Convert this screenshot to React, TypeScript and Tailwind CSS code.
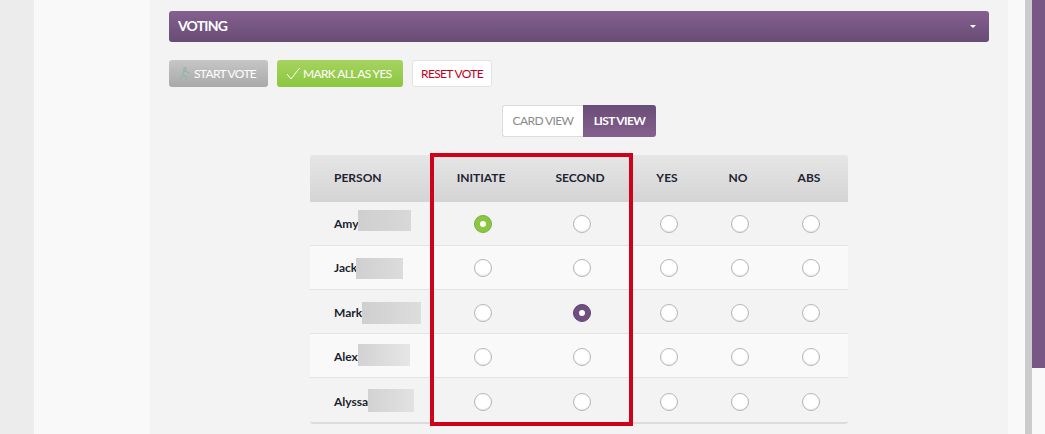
const rows = [
  { name: "Amy", blur: "ml-[-1px] mt-[-7px] h-[21px] w-[53px] from-[#cfcfcf] to-[#d8d8d8]", row: "h-[44px]", initiate: true, second: false },
  { name: "Jack", blur: "ml-[-1px] mt-[1px] h-[21px] w-[47px] from-[#d0d0d0] to-[#dcdcdc]", row: "h-[44px]", initiate: false, second: false },
  { name: "Mark", blur: "mt-0 h-[22px] w-[59px] from-[#cfcfcf] to-[#dddddd]", row: "h-[44px] pt-[2px]", initiate: false, second: true },
  { name: "Alex", blur: "mt-[-4px] h-[22px] w-[52px] from-[#d2d2d2] to-[#e6e6e6]", row: "h-[44px] pt-[2px]", initiate: false, second: false },
  { name: "Alyssa", blur: "mt-[-3px] h-[23px] w-[46px] from-[#d2d2d2] to-[#e2e2e2]", row: "h-[44px] pt-[3px]", initiate: false, second: false },
]

const gridCols = "grid grid-cols-[124px_98px_100px_74px_68px_74px]"

function Radio({ color }: { color?: "green" | "purple" }) {
  if (color) {
    return (
      <span
        className={`flex h-[18px] w-[18px] items-center justify-center rounded-full border ${
          color === "green" ? "border-[#7fae3f] bg-[#8cc63f]" : "border-[#5f4470] bg-[#6f4f80]"
        }`}
      >
        <span className="h-[6px] w-[6px] rounded-full bg-white" />
      </span>
    )
  }
  return <span className="h-[18px] w-[18px] rounded-full border border-[#b5b5b5] bg-white shadow-[inset_0_-1px_1px_rgba(0,0,0,0.08)]" />
}

function HeaderCell({ label }: { label: string }) {
  return <div className="pb-[2px] pr-1 text-center">{label}</div>
}

export default function App() {
  return (
    <div className="flex h-[434px] w-[1045px] overflow-hidden bg-[#ececec] font-['Lato','Open_Sans',sans-serif] text-[12px]">
      <div className="w-[34px] shrink-0" />
      <div className="w-[116px] shrink-0 bg-[#f9f9f9]" />
      <main className="w-[858px] shrink-0 bg-[#f3f3f3] pl-[19px] pt-[11px]">
        <div className="flex h-[31px] w-[820px] items-center justify-between rounded-[3px] bg-gradient-to-b from-[#85608f] to-[#674c75] pl-[9px] pr-[13px] text-[14px] font-bold tracking-[-0.8px] text-white">
          <span className="pb-[2px]">VOTING</span>
          <span className="mt-[-1px] h-0 w-0 border-x-[3px] border-t-[3px] border-x-transparent border-t-white" />
        </div>

        <div className="mt-[18px] flex h-[27px] gap-[9px] tracking-[-0.65px]">
          <button className="flex w-[99px] items-center gap-[3px] rounded-[3px] bg-gradient-to-b from-[#c6c6c6] to-[#a9a9a9] pl-[10px] text-white">
            <svg width="12" height="14" viewBox="0 0 12 14" fill="none" stroke="#8fb5ac" strokeWidth="1.1" strokeLinecap="round" strokeLinejoin="round">
              <circle cx="6" cy="2" r="1.4" />
              <path d="M4.5 4.2 L7 4.5 L10.5 6.5 M4.5 4.2 L4 8 L7.5 9.5 L7 13 M4 8 L1 12" />
            </svg>
            START VOTE
          </button>
          <button className="flex w-[126px] items-center gap-[3px] rounded-[3px] bg-gradient-to-b from-[#a6d35f] to-[#8cc63f] pl-[9px] text-white">
            <svg width="14" height="13" viewBox="0 0 14 13" fill="none" stroke="white" strokeWidth="1">
              <path d="M1 7 L5 12 L13.5 1" />
            </svg>
            MARK ALL AS YES
          </button>
          <button className="w-[80px] rounded-[3px] border border-[#e2e2e2] bg-white text-center text-[#c00023]">RESET VOTE</button>
        </div>

        <div className="ml-[333px] mt-[18px] flex h-[32px] w-[154px] tracking-[-0.6px]">
          <div className="flex w-[81px] items-center justify-center rounded-l-[3px] border border-r-0 border-[#dddddd] bg-white text-[#8a8a8a]">CARD VIEW</div>
          <div className="flex w-[73px] items-center justify-center rounded-r-[3px] bg-gradient-to-b from-[#694d77] to-[#85608f] font-bold text-white">LIST VIEW</div>
        </div>

        <div className="relative ml-[141px] mt-[18px] w-[538px]">
          <div className="overflow-hidden rounded-[3px] border-b-2 border-[#dcdcdc]">
            <div className={`${gridCols} h-[47px] items-center bg-gradient-to-b from-[#e6e6e6] to-[#d4d4d4] font-bold text-[#1f2433]`}>
              <div className="pb-[2px] pl-[24px]">PERSON</div>
              <HeaderCell label="INITIATE" />
              <HeaderCell label="SECOND" />
              <HeaderCell label="YES" />
              <HeaderCell label="NO" />
              <HeaderCell label="ABS" />
            </div>
            {rows.map((row, i) => (
              <div
                key={row.name}
                className={`${gridCols} ${row.row} items-center border-b border-[#e3e3e3] last:border-b-0 ${
                  i % 2 === 0 ? "bg-[#f3f3f3]" : "bg-[#f9f9f9]"
                }`}
              >
                <div className="flex items-center pl-[24px] font-bold text-[#1b1f2b]">
                  <span>{row.name}</span>
                  <span className={`bg-gradient-to-r ${row.blur}`} />
                </div>
                <div className="flex justify-center">
                  <Radio color={row.initiate ? "green" : undefined} />
                </div>
                <div className="flex justify-center">
                  <Radio color={row.second ? "purple" : undefined} />
                </div>
                <div className="flex justify-center">
                  <Radio />
                </div>
                <div className="flex justify-center">
                  <Radio />
                </div>
                <div className="flex justify-center">
                  <Radio />
                </div>
              </div>
            ))}
          </div>
          <div className="absolute left-[120px] top-[-2px] h-[273px] w-[203px] border-[4px] border-[#d0021b]" />
        </div>
      </main>
      <div className="w-[17px] shrink-0 bg-[#f9f9f9]" />
      <div className="w-[7px] shrink-0 bg-[#cccccc]" />
      <div className="w-[13px] shrink-0 bg-[#f9f9f9]">
        <div className="h-[368px] bg-[#795785]" />
      </div>
    </div>
  )
}
